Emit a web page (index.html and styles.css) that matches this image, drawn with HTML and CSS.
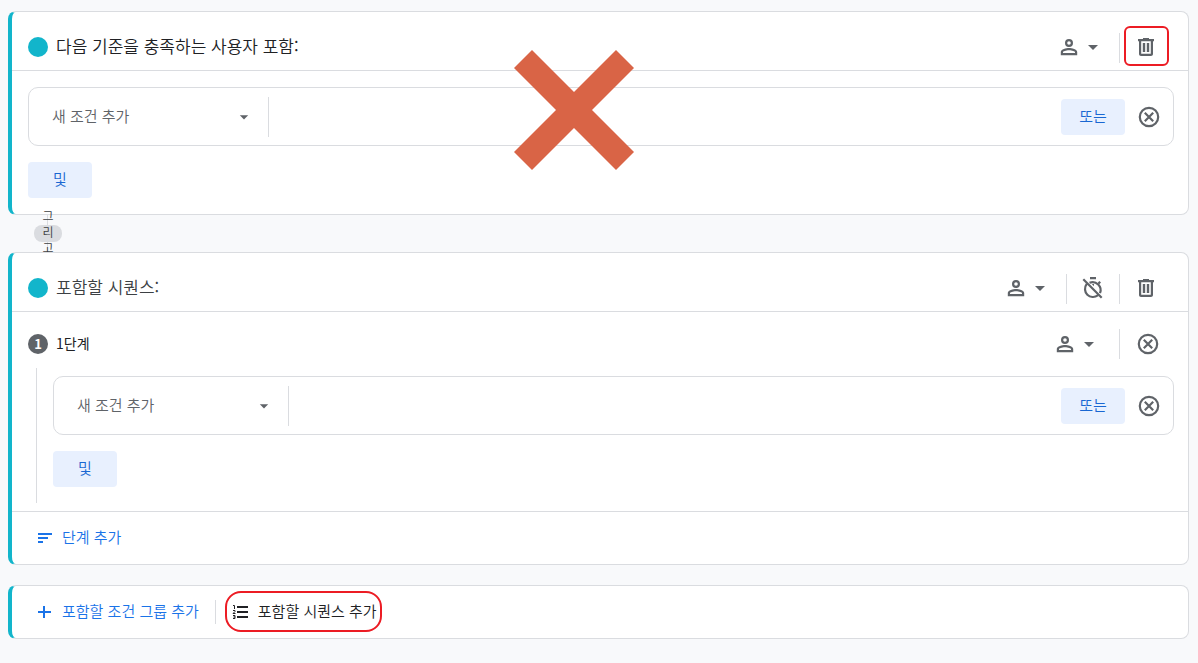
FILE: index.html
```html
<!DOCTYPE html>
<html lang="ko">
<head>
    <meta charset="UTF-8">
    <meta name="viewport" content="width=device-width, initial-scale=1.0">
    <title>세그먼트 만들기</title>
    <link rel="stylesheet" href="styles.css">
</head>
<body>
    <svg class="sprite" aria-hidden="true">
        <symbol id="person" viewBox="0 0 24 24">
            <path d="M12 4a4 4 0 1 0 0 8 4 4 0 0 0 0-8zm0 2.200a1.800 1.800 0 1 1 0 3.600 1.800 1.800 0 0 1 0-3.600zM12 13c-2.700 0-8.200 1.300-8.200 4v3.200h16.400V17c0-2.700-5.500-4-8.200-4zm6 5H6v-1c0-.7 2.900-1.800 6-1.800s6 1.100 6 1.800z"/>
        </symbol>
        <symbol id="arrow" viewBox="0 0 24 24">
            <path d="M7 10l5 5 5-5z"/>
        </symbol>
        <symbol id="trash" viewBox="0 0 24 24">
            <path d="M15 4V3H9v1H4v2.200h1V19c0 1.100.9 2 2 2h10c1.100 0 2-.9 2-2V6.200h1V4h-5zm1.800 14.800H7.200V6.200h9.600v12.600zM8.800 8h2.400v9H8.800zM12.800 8h2.400v9h-2.400z"/>
        </symbol>
        <symbol id="cancel" viewBox="0 0 24 24">
            <circle cx="12" cy="12" r="9.200" fill="none" stroke="currentColor" stroke-width="2.200"/>
            <path d="M7.800 7.800l8.400 8.400M16.200 7.800l-8.400 8.400" fill="none" stroke="currentColor" stroke-width="2.200"/>
        </symbol>
        <symbol id="timer-off" viewBox="0 0 24 24">
            <path d="M9 1h6v2.200H9zM11 8h2v2.200l-2-2z"/>
            <path d="M8.500 6.800A8 8 0 0 1 19 17.200M16.800 19.400A8 8 0 0 1 5.600 8.200M17.600 7.400l1.600-1.600M2.300 3.300l18.400 18.400" fill="none" stroke="currentColor" stroke-width="2.200"/>
        </symbol>
        <symbol id="sort" viewBox="0 0 18 18">
            <path d="M2 4h14v2H2zM2 8h10v2H2zM2 12h5v2H2z"/>
        </symbol>
        <symbol id="plus" viewBox="0 0 18 18">
            <path d="M7 3h2v5h6v2H9v5H7v-5H2V8h5z"/>
        </symbol>
        <symbol id="numbers" viewBox="0 0 18 18">
            <path d="M5 3h11v2H5zM5 8h11v2H5zM5 13h11v2H5z"/>
            <path d="M1 2.500h1.500V6M1 7.500h2v1L1 10.500h2.500M1 12.500h2V15.500H1M1.500 14H3" fill="none" stroke="currentColor"/>
        </symbol>
    </svg>

    <main class="builder">
        <section class="card">
            <header class="card-header">
                <span class="dot"></span>
                <h2>다음 기준을 충족하는 사용자 포함:</h2>
                <div class="actions">
                    <button class="scope" aria-label="범위"><svg><use href="#person"/></svg><svg><use href="#arrow"/></svg></button>
                    <span class="divider"></span>
                    <button class="icon-button marked" aria-label="삭제"><svg><use href="#trash"/></svg></button>
                </div>
            </header>
            <div class="card-body">
                <div class="condition">
                    <div class="picker">
                        <select aria-label="조건"><option>새 조건 추가</option></select>
                        <svg><use href="#arrow"/></svg>
                    </div>
                    <button class="chip">또는</button>
                    <button class="clear" aria-label="조건 삭제"><svg><use href="#cancel"/></svg></button>
                </div>
                <button class="chip">및</button>
            </div>
            <svg class="cross" viewBox="0 0 120 120" aria-hidden="true">
                <path d="M18 0l42 42 42-42 18 18-42 42 42 42-18 18-42-42-42 42-18-18 42-42-42-42z"/>
            </svg>
        </section>

        <div class="connector"><span>그리고</span></div>

        <section class="card">
            <header class="card-header sequence">
                <span class="dot"></span>
                <h2>포함할 시퀀스:</h2>
                <div class="actions">
                    <button class="scope" aria-label="범위"><svg><use href="#person"/></svg><svg><use href="#arrow"/></svg></button>
                    <span class="divider"></span>
                    <button class="icon-button" aria-label="시간 제한"><svg><use href="#timer-off"/></svg></button>
                    <span class="divider"></span>
                    <button class="icon-button" aria-label="삭제"><svg><use href="#trash"/></svg></button>
                </div>
            </header>
            <div class="step-header">
                <span class="dot number">1</span>
                <h3>1단계</h3>
                <div class="actions">
                    <button class="scope" aria-label="범위"><svg><use href="#person"/></svg><svg><use href="#arrow"/></svg></button>
                    <span class="divider"></span>
                    <button class="icon-button" aria-label="단계 삭제"><svg><use href="#cancel"/></svg></button>
                </div>
            </div>
            <div class="step-body">
                <div class="condition">
                    <div class="picker">
                        <select aria-label="조건"><option>새 조건 추가</option></select>
                        <svg><use href="#arrow"/></svg>
                    </div>
                    <button class="chip">또는</button>
                    <button class="clear" aria-label="조건 삭제"><svg><use href="#cancel"/></svg></button>
                </div>
                <button class="chip">및</button>
            </div>
            <footer class="links card-footer">
                <button class="link"><svg><use href="#sort"/></svg><span>단계 추가</span></button>
            </footer>
        </section>

        <section class="card links add-bar">
            <button class="link"><svg><use href="#plus"/></svg><span>포함할 조건 그룹 추가</span></button>
            <span class="divider short"></span>
            <button class="link dark marked"><svg><use href="#numbers"/></svg><span>포함할 시퀀스 추가</span></button>
        </section>
    </main>
</body>
</html>
```

FILE: styles.css
```css
* {
    box-sizing: border-box;
}
body {
    margin: 0;
    background-color: #f8f9fb;
    color: #202124;
    font-family: "Noto Sans CJK KR", sans-serif;
    font-size: 15px;
    font-weight: 350;
    line-height: 20px;
}
button, select {
    margin: 0;
    padding: 0;
    border: none;
    background: none;
    color: inherit;
    font: inherit;
    cursor: pointer;
}
h2, h3 {
    margin: 0;
    padding-bottom: 2px;
    font-weight: 350;
}
h2 {
    font-size: 17px;
    line-height: 24px;
}
h3 {
    font-size: 14px;
    font-weight: 400;
}
svg {
    display: block;
    width: 24px;
    height: 24px;
    fill: currentColor;
}
.sprite {
    position: absolute;
    width: 0;
    height: 0;
}
.builder {
    padding: 11px 9px 24px 8px;
}
.card {
    position: relative;
    z-index: 2;
    background-color: #fff;
    border: 1px solid #dadce0;
    border-left: 4px solid #12b5cb;
    border-radius: 8px;
}
.card:first-child {
    z-index: 0;
}

/* headers */
.card-header, .step-header {
    display: flex;
    align-items: center;
    gap: 8px;
    padding-left: 16px;
}
.card-header {
    height: 59px;
    padding-top: 12px;
    padding-right: 22px;
    border-bottom: 1px solid #dadce0;
}
.sequence {
    color: #3c4043;
}
.step-header {
    height: 40px;
    margin-top: 12px;
    padding-right: 20px;
}
.dot {
    width: 20px;
    height: 20px;
    border-radius: 50%;
    background-color: #12b5cb;
}
.number {
    background-color: #5f6368;
    color: #fff;
    font-size: 13px;
    font-weight: 700;
    text-align: center;
}
.actions {
    display: flex;
    align-items: center;
    gap: 6px;
    margin-left: auto;
    color: #5f6368;
}
.step-header .actions {
    gap: 8px;
}
.scope {
    display: flex;
    padding: 8px;
}
.step-header .scope {
    padding-right: 10px;
}
.icon-button {
    display: flex;
    align-items: center;
    justify-content: center;
    width: 40px;
    height: 40px;
}
.divider {
    width: 1px;
    height: 30px;
    background-color: #dadce0;
}
.card-header .divider {
    margin-top: 2px;
}
.short {
    height: 24px;
}

/* conditions */
.card-body {
    padding: 16px 14px 16px 16px;
}
.condition {
    display: flex;
    align-items: center;
    height: 59px;
    margin-bottom: 16px;
    border: 1px solid #dadce0;
    border-radius: 10px;
}
.picker {
    position: relative;
    width: 21%;
    height: 40px;
    margin-right: auto;
    border-right: 1px solid #dadce0;
    color: #5f6368;
}
.picker select {
    appearance: none;
    width: 100%;
    height: 38px;
    padding: 0 48px 0 23px;
}
.picker svg {
    position: absolute;
    top: 10px;
    right: 14px;
    width: 20px;
    height: 20px;
    pointer-events: none;
}
.chip {
    width: 64px;
    height: 36px;
    padding-bottom: 2px;
    border-radius: 4px;
    background-color: #e8f0fe;
    color: #1967d2;
}
.clear {
    margin: 0 12px;
    color: #5f6368;
}
.step-body {
    margin: 4px 14px 8px 24px;
    padding: 8px 0 16px 16px;
    border-left: 1px solid #dadce0;
}

/* connector between groups */
.connector {
    position: relative;
    z-index: 1;
    display: flex;
    align-items: center;
    height: 37px;
    padding-left: 26px;
    color: #3c4043;
    font-size: 12px;
    line-height: 16px;
}
.connector::before {
    content: '';
    position: absolute;
    top: 0;
    left: 39px;
    width: 1px;
    height: 100%;
    background-color: #dadce0;
}
.connector span {
    position: relative;
    display: flex;
    align-items: center;
    width: 28px;
    height: 17px;
    padding: 0 8px 4px;
    border-radius: 8px;
    background-color: #dadce0;
    text-align: center;
    word-break: break-all;
}

/* links */
.links {
    display: flex;
    align-items: center;
    padding-left: 16px;
}
.card-footer {
    height: 53px;
    border-top: 1px solid #dadce0;
}
.add-bar {
    height: 54px;
    margin-top: 20px;
}
.link {
    display: flex;
    align-items: center;
    gap: 8px;
    height: 40px;
    padding: 0 16px 0 8px;
    color: #1a73e8;
}
.link span {
    padding-bottom: 2px;
}
.link svg {
    width: 18px;
    height: 18px;
}
.dark {
    margin-left: 8px;
    padding-right: 4px;
    color: #202124;
}

/* red marks */
.marked {
    position: relative;
}
.marked::after {
    content: '';
    position: absolute;
    inset: -1px -3px 1px -2px;
    border: 2px solid #ec1c24;
    border-radius: 6px;
}
.dark::after {
    inset: -1px -1px 0 1px;
    border-radius: 16px;
}
.cross {
    position: absolute;
    top: 38px;
    left: calc(50% - 86px);
    width: 120px;
    height: 120px;
    fill: #d96446;
}
```
